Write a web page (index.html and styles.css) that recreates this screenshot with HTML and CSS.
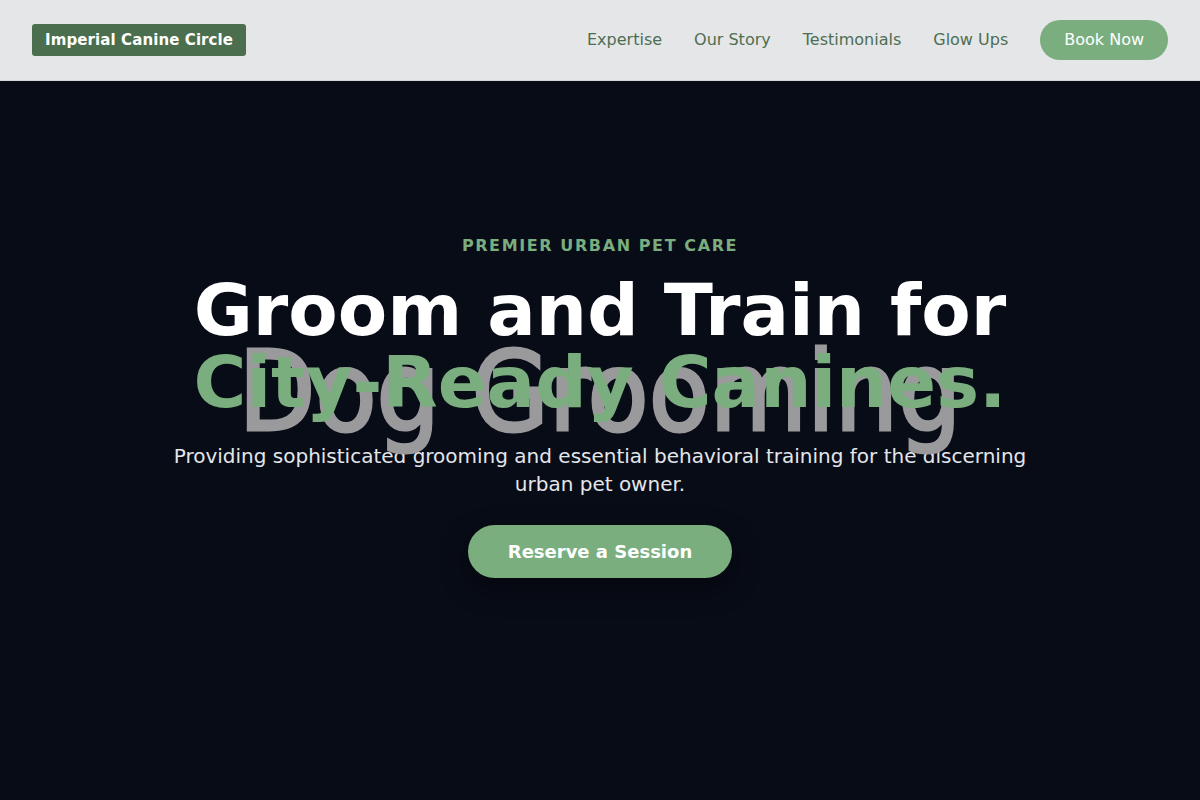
FILE: index.html
```html
<!DOCTYPE html>
<html lang="en">
<head>
<meta charset="utf-8">
<title>Imperial Canine Circle</title>
<link rel="stylesheet" href="styles.css">
</head>
<body>
<header class="nav">
  <a class="logo" href="#">Imperial Canine Circle</a>
  <nav class="nav-links">
    <a href="#">Expertise</a>
    <a href="#">Our Story</a>
    <a href="#">Testimonials</a>
    <a href="#">Glow Ups</a>
    <a class="nav-cta" href="#">Book Now</a>
  </nav>
</header>
<main class="hero">
  <p class="eyebrow">PREMIER URBAN PET CARE</p>
  <div class="headline-wrap">
    <span class="watermark" aria-hidden="true">Dog Grooming</span>
    <h1 class="headline">Groom and Train for<br><span class="accent">City-Ready Canines.</span></h1>
  </div>
  <p class="subtitle">Providing sophisticated grooming and essential behavioral training for the discerning urban pet owner.</p>
  <a class="hero-cta" href="#">Reserve a Session</a>
</main>
</body>
</html>
```

FILE: styles.css
```css
* { box-sizing: border-box; }

html, body {
  margin: 0;
  padding: 0;
}

body {
  font-family: "DejaVu Sans", sans-serif;
  background: #080c17;
  height: 800px;
  display: flex;
  flex-direction: column;
}

a { text-decoration: none; }

.nav {
  height: 81px;
  background: #e5e6e8;
  border-bottom: 1px solid #d4d6d9;
  display: flex;
  align-items: center;
  justify-content: space-between;
  padding: 0 32px;
}

.logo {
  background: #4b6e4e;
  color: #ffffff;
  font-weight: bold;
  font-size: 15px;
  line-height: 24px;
  padding: 4px 13px;
  border-radius: 3px;
  letter-spacing: 0.1px;
}

.nav-links {
  display: flex;
  align-items: center;
  gap: 32px;
}

.nav-links a {
  color: #4d6e53;
  font-size: 16px;
  line-height: 24px;
}

.nav-links a.nav-cta {
  background: #7aae7e;
  color: #ffffff;
  padding: 8px 24px;
  border-radius: 20px;
}

.hero {
  flex: 1;
  display: flex;
  flex-direction: column;
  align-items: center;
  text-align: center;
  padding-top: 154px;
}

.eyebrow {
  margin: 0 0 18px;
  color: #7aae7e;
  font-weight: bold;
  font-size: 16px;
  line-height: 21px;
  letter-spacing: 0.1em;
}

.headline-wrap {
  position: relative;
  width: 100%;
}

.watermark {
  position: absolute;
  left: 0;
  right: 0;
  top: 62px;
  font-family: "DejaVu Sans Condensed", "DejaVu Sans", sans-serif;
  font-stretch: condensed;
  font-size: 111px;
  line-height: 1;
  color: #9a9a9c;
  -webkit-text-stroke: 3px #9a9a9c;
  white-space: nowrap;
}

.headline {
  position: relative;
  margin: 0;
  color: #ffffff;
  font-weight: bold;
  font-size: 72px;
  line-height: 72px;
}

.accent { color: #7aae7e; }

.subtitle {
  margin: 24px 0 0;
  max-width: 880px;
  color: #e4e6ea;
  font-size: 20px;
  line-height: 28px;
}

.hero-cta {
  margin-top: 27px;
  background: #7aae7e;
  color: #ffffff;
  font-weight: bold;
  font-size: 18px;
  line-height: 21px;
  padding: 16px 40px;
  border-radius: 27px;
  box-shadow: 0 10px 28px rgba(0, 0, 0, 0.45);
}
```
